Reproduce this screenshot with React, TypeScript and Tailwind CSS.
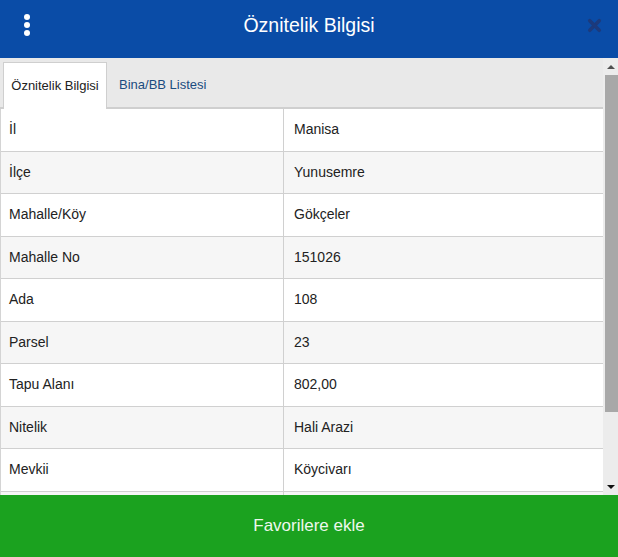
import { X } from 'lucide-react';

const ROWS: [string, string][] = [
  ['İl', 'Manisa'],
  ['İlçe', 'Yunusemre'],
  ['Mahalle/Köy', 'Gökçeler'],
  ['Mahalle No', '151026'],
  ['Ada', '108'],
  ['Parsel', '23'],
  ['Tapu Alanı', '802,00'],
  ['Nitelik', 'Hali Arazi'],
  ['Mevkii', 'Köycivarı'],
  ['', ''],
];

export default function App() {
  return (
    <div
      className="flex h-[557px] w-[618px] flex-col overflow-hidden bg-white text-[#222]"
      style={{ fontFamily: '"Liberation Sans", Arial, sans-serif' }}
    >
      {/* header */}
      <div className="relative flex h-[58px] shrink-0 items-center justify-center bg-[#0a4ca7] pb-[7px]">
        <div className="absolute left-[24px] top-[14px] flex flex-col gap-[2px]">
          <span className="h-[6px] w-[6px] rounded-full bg-white" />
          <span className="h-[6px] w-[6px] rounded-full bg-white" />
          <span className="h-[6px] w-[6px] rounded-full bg-white" />
        </div>
        <h1 className="text-[19.5px] text-white">Öznitelik Bilgisi</h1>
        <button className="absolute right-[14px] top-[16px] text-[#1c3a7c]">
          <X size={19} strokeWidth={4.5} />
        </button>
      </div>

      {/* body */}
      <div className="flex min-h-0 flex-1">
        <div className="min-w-0 flex-1 overflow-hidden">
          <div className="flex h-[51px] items-end border-b-2 border-[#cfcfcf] bg-[#e9e9e9] pl-[3px]">
            <div className="-mb-[2px] flex h-[47px] w-[104px] items-center justify-center border border-b-0 border-[#cfcfcf] bg-white text-[13px] text-[#222]">
              Öznitelik Bilgisi
            </div>
            <div className="flex h-[45px] items-center pl-[12px] text-[13px] text-[#1b4c80]">
              Bina/BB Listesi
            </div>
          </div>
          <div className="border-l border-[#d4d4d4]">
            {ROWS.map(([k, v], i) => (
              <div
                key={i}
                className={`flex h-[42.5px] border-b border-[#d0d0d0] text-[14px] ${i % 2 === 1 ? 'bg-[#f6f6f6]' : 'bg-white'}`}
              >
                <div className="flex w-[283px] items-center border-r border-[#d0d0d0] pl-[8px]">{k}</div>
                <div className="flex flex-1 items-center pl-[10px]">{v}</div>
              </div>
            ))}
          </div>
        </div>

        {/* scrollbar */}
        <div className="flex w-[15px] shrink-0 flex-col bg-[#ececec]">
          <div className="flex h-[17px] items-center justify-center">
            <span className="h-0 w-0 border-x-[4px] border-b-[4px] border-x-transparent border-b-[#505050]" />
          </div>
          <div className="ml-[2px] h-[337px] bg-[#a8a8a8]" />
          <div className="flex-1" />
          <div className="flex h-[17px] items-center justify-center">
            <span className="h-0 w-0 border-x-[4px] border-t-[4px] border-x-transparent border-t-[#101010]" />
          </div>
        </div>
      </div>

      {/* footer */}
      <button className="flex h-[62px] shrink-0 items-center justify-center bg-[#1ba21f] text-[17px] text-[#eef8ee]">
        Favorilere ekle
      </button>
    </div>
  );
}
